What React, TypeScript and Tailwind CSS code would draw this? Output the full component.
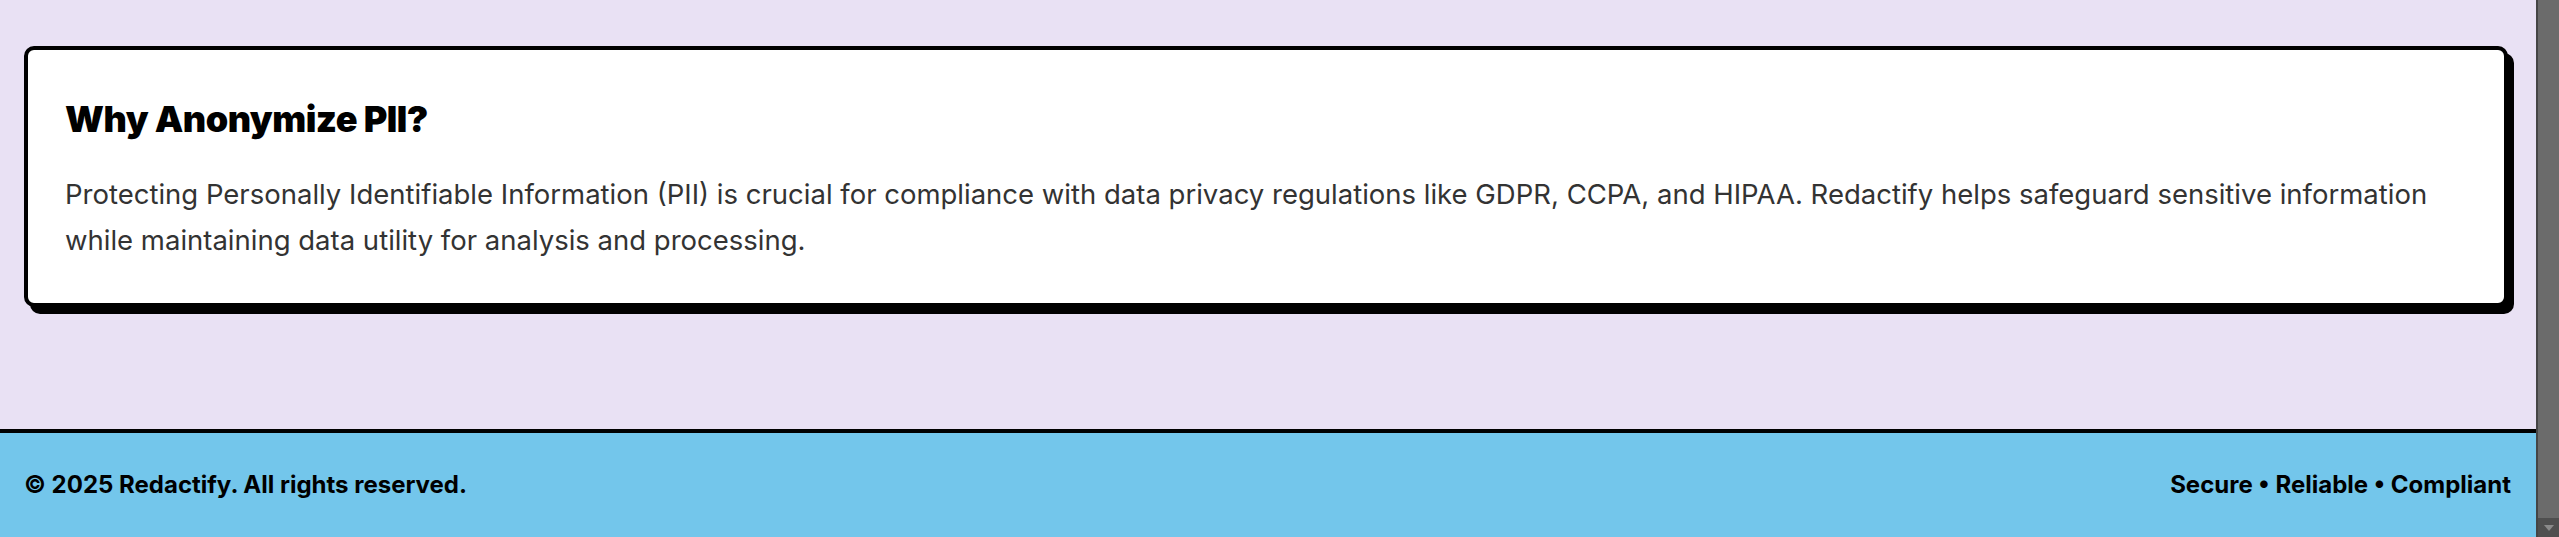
function Scrollbar() {
  return (
    <div className="flex w-[23px] shrink-0 flex-col border-l-2 border-[#454545] bg-[#4f4f4f]">
      <div className="flex-1 bg-[#6b6b6b]" />
      <div className="flex h-[19px] items-center justify-center bg-[#4f4f4f]">
        <svg width="10" height="6" viewBox="0 0 10 6">
          <polygon points="0,0 10,0 5,6" fill="#8a8a8a" />
        </svg>
      </div>
    </div>
  );
}

export default function App() {
  return (
    <div className="flex h-[537px] w-full overflow-hidden bg-[#e9e1f4] font-['Inter',sans-serif]">
      <div className="flex min-w-0 flex-1 flex-col">
        <main className="flex-1 pl-[24px] pr-[28px] pt-[46px]">
          <section className="rounded-[10px] border-4 border-black bg-white pl-[37px] pr-[30px] pt-[45px] pb-[40px] shadow-[6px_7px_0_0_#000]">
            <h2 className="text-[36px] font-black leading-[49px] tracking-[-0.5px] text-black">
              Why Anonymize PII?
            </h2>
            <p className="mt-[27px] text-[27.5px] leading-[46px] text-[#333333]">
              Protecting Personally Identifiable Information (PII) is crucial for compliance with data
              privacy regulations like GDPR, CCPA, and HIPAA. Redactify helps safeguard sensitive
              information while maintaining data utility for analysis and processing.
            </p>
          </section>
        </main>
        <footer className="flex h-[108px] items-center justify-between border-t-4 border-black bg-[#73c6eb] pl-[24px] pr-[25px] text-[24px] font-bold text-black">
          <p>© 2025 Redactify. All rights reserved.</p>
          <p>Secure • Reliable • Compliant</p>
        </footer>
      </div>
      <Scrollbar />
    </div>
  );
}
